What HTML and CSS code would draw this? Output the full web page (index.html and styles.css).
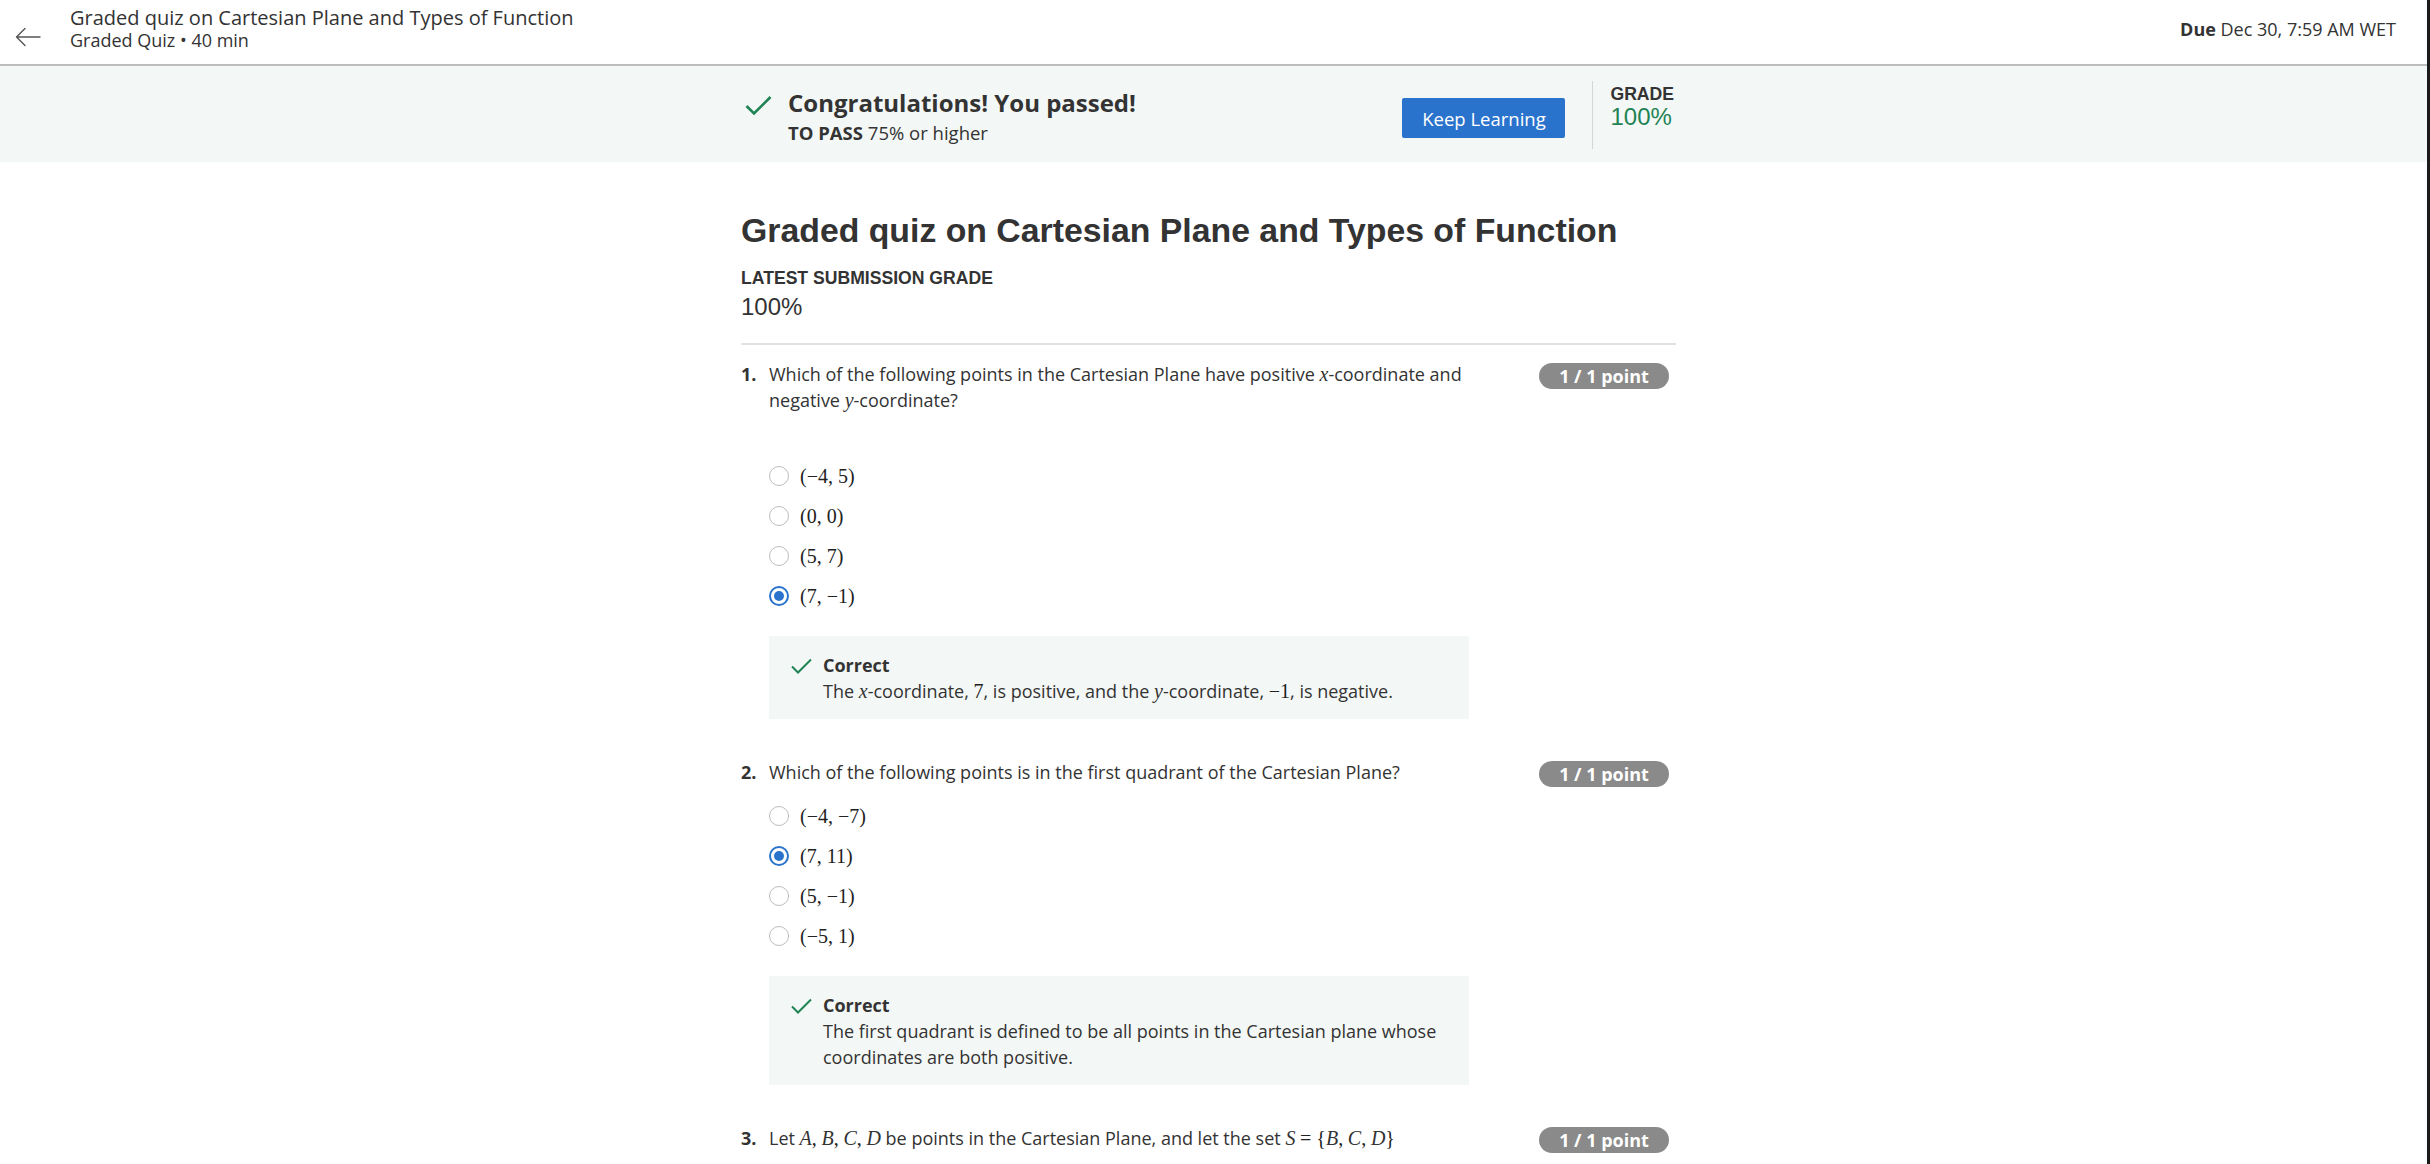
FILE: index.html
```html
<!DOCTYPE html>
<html lang="en">
<head>
<meta charset="utf-8">
<title>Graded quiz on Cartesian Plane and Types of Function</title>
<link rel="stylesheet" href="styles.css">
</head>
<body>
<div class="page">
  <header class="topbar">
    <div class="topbar-left">
      <svg class="back" width="26" height="20" viewBox="0 0 26 20" aria-hidden="true">
        <path d="M25 10 H1.5 M10 1.5 L1.5 10 L10 18.5" fill="none" stroke="#555" stroke-width="1.4" stroke-linecap="round" stroke-linejoin="round"/>
      </svg>
      <div class="topbar-titles">
        <div class="topbar-title">Graded quiz on Cartesian Plane and Types of Function</div>
        <div class="topbar-sub">Graded Quiz • 40 min</div>
      </div>
    </div>
    <div class="due"><b>Due</b> Dec 30, 7:59 AM WET</div>
  </header>

  <section class="banner">
    <div class="banner-inner">
      <svg class="banner-check" width="27" height="21" viewBox="0 0 27 21" aria-hidden="true">
        <path d="M1.5 11 L9 18.5 L25.5 2" fill="none" stroke="#1f8354" stroke-width="2.6"/>
      </svg>
      <div class="banner-text">
        <div class="banner-head">Congratulations! You passed!</div>
        <div class="banner-sub"><b>TO PASS</b> 75% or higher</div>
      </div>
      <button class="btn-keep">Keep Learning</button>
      <div class="banner-divider"></div>
      <div class="grade">
        <div class="grade-label">GRADE</div>
        <div class="grade-value">100%</div>
      </div>
    </div>
  </section>

  <main class="column">
    <h1 class="quiz-title">Graded quiz on Cartesian Plane and Types of Function</h1>
    <div class="latest-label">LATEST SUBMISSION GRADE</div>
    <div class="latest-value">100%</div>
    <hr class="rule">

    <div class="question">
      <div class="q-head">
        <span class="q-num">1.</span>
        <div class="q-text">Which of the following points in the Cartesian Plane have positive <span class="mi">x</span>-coordinate and<br>negative <span class="mi">y</span>-coordinate?</div>
        <span class="badge">1 / 1 point</span>
      </div>
      <div class="q-spacer"></div>
      <div class="options">
        <div class="option"><span class="radio"></span><span class="math">(−4, 5)</span></div>
        <div class="option"><span class="radio"></span><span class="math">(0, 0)</span></div>
        <div class="option"><span class="radio"></span><span class="math">(5, 7)</span></div>
        <div class="option"><span class="radio radio-on"></span><span class="math">(7, −1)</span></div>
      </div>
      <div class="feedback">
        <svg class="fb-check" width="21" height="16" viewBox="0 0 21 16" aria-hidden="true">
          <path d="M1 8.5 L7 14.5 L20 1.5" fill="none" stroke="#1f8354" stroke-width="2"/>
        </svg>
        <div class="fb-body">
          <div class="fb-title">Correct</div>
          <div class="fb-text">The <span class="mi">x</span>-coordinate, <span class="mn">7</span>, is positive, and the <span class="mi">y</span>-coordinate, <span class="mn">−1</span>, is negative.</div>
        </div>
      </div>
    </div>

    <div class="question">
      <div class="q-head">
        <span class="q-num">2.</span>
        <div class="q-text">Which of the following points is in the first quadrant of the Cartesian Plane?</div>
        <span class="badge">1 / 1 point</span>
      </div>
      <div class="options">
        <div class="option"><span class="radio"></span><span class="math">(−4, −7)</span></div>
        <div class="option"><span class="radio radio-on"></span><span class="math">(7, 11)</span></div>
        <div class="option"><span class="radio"></span><span class="math">(5, −1)</span></div>
        <div class="option"><span class="radio"></span><span class="math">(−5, 1)</span></div>
      </div>
      <div class="feedback">
        <svg class="fb-check" width="21" height="16" viewBox="0 0 21 16" aria-hidden="true">
          <path d="M1 8.5 L7 14.5 L20 1.5" fill="none" stroke="#1f8354" stroke-width="2"/>
        </svg>
        <div class="fb-body">
          <div class="fb-title">Correct</div>
          <div class="fb-text">The first quadrant is defined to be all points in the Cartesian plane whose<br>coordinates are both positive.</div>
        </div>
      </div>
    </div>

    <div class="question">
      <div class="q-head">
        <span class="q-num">3.</span>
        <div class="q-text">Let <span class="mi">A</span><span class="mn">,</span> <span class="mi">B</span><span class="mn">,</span> <span class="mi">C</span><span class="mn">,</span> <span class="mi">D</span> be points in the Cartesian Plane, and let the set <span class="mi">S</span> <span class="mn">= {</span><span class="mi">B</span><span class="mn">,</span> <span class="mi">C</span><span class="mn">,</span> <span class="mi">D</span><span class="mn">}</span></div>
        <span class="badge">1 / 1 point</span>
      </div>
    </div>
  </main>
</div>
</body>
</html>
```

FILE: styles.css
```css
* { box-sizing: border-box; }
html, body { margin: 0; padding: 0; background: #ffffff; }
body { width: 2430px; height: 1164px; overflow: hidden; font-family: "Open Sans", "Liberation Sans", sans-serif; color: #1f1f1f; }

.page { width: 2430px; min-height: 1164px; border-right: 3px solid #1a1a1a; }

/* top bar */
.topbar { height: 66px; border-bottom: 2px solid #bdbdbd; display: flex; justify-content: space-between; align-items: flex-start; padding: 6px 31px 0 15px; }
.topbar-left { display: flex; align-items: flex-start; }
.back { margin-top: 21px; margin-right: 29px; }
.topbar-title { font-size: 20px; line-height: 24px; color: #333; }
.topbar-sub { font-size: 18px; line-height: 20px; color: #333; }
.due { font-size: 18px; line-height: 24px; color: #333; margin-top: 11px; }
.due b { font-weight: 700; }

/* banner */
.banner { background: #f3f8f6; height: 96px; }
.banner-inner { width: 929px; margin-left: 745px; display: flex; align-items: flex-start; height: 96px; }
.banner-check { margin-top: 29px; margin-right: 16px; flex: none; }
.banner-text { flex: 1; margin-top: 22px; }
.banner-head { font-size: 24px; line-height: 30px; font-weight: 700; color: #333; }
.banner-sub { font-size: 18.5px; line-height: 24px; color: #333; margin-top: 3px; }
.banner-sub b { font-weight: 700; }
.btn-keep { margin-top: 32px; width: 163px; height: 40px; background: #2a73cc; color: #fff; border: 0; border-radius: 2px; font-family: "Open Sans", sans-serif; font-size: 18.5px; padding: 0; }
.banner-divider { width: 1px; height: 68px; background: #d6d6d6; margin: 15px 17px 0 27px; }
.grade { margin-top: 18px; font-family: "Liberation Sans", Arial, sans-serif; }
.grade-label { font-size: 17.6px; line-height: 20px; font-weight: 700; color: #333; }
.grade-value { font-size: 24px; line-height: 26px; color: #1f8354; }

/* main column */
.column { width: 935px; margin-left: 741px; }
.quiz-title { font-family: "Liberation Sans", Arial, sans-serif; font-size: 33.8px; line-height: 40px; font-weight: 700; color: #333; margin: 48px 0 0 0; }
.latest-label { font-family: "Liberation Sans", Arial, sans-serif; font-size: 17.6px; line-height: 22px; font-weight: 700; color: #333; margin-top: 17px; }
.latest-value { font-family: "Liberation Sans", Arial, sans-serif; font-size: 24px; line-height: 30px; color: #333; margin-top: 3px; }
.rule { border: 0; height: 2px; background: #e1e1e1; margin: 21px 0 0 0; }

.question { margin-top: 16px; }
.question + .question { margin-top: 40px; }
.q-head { display: flex; align-items: flex-start; }
.q-num { width: 28px; flex: none; font-weight: 700; font-size: 18px; line-height: 26px; color: #333; }
.q-text { flex: 1; font-size: 18px; line-height: 26px; color: #333; padding-right: 40px; }
.badge { flex: none; margin-top: 2px; margin-right: 7px; width: 130px; height: 26px; border-radius: 13px; background: #8a8a8a; color: #fff; font-weight: 700; font-size: 18px; line-height: 26px; text-align: center; }

.q-spacer { height: 34px; }
.options { padding-left: 28px; margin-top: 9px; }
.option { height: 40px; display: flex; align-items: center; }
.radio { width: 20px; height: 20px; border-radius: 50%; border: 1.5px solid #bdbdbd; background: #fff; margin-right: 11px; flex: none; position: relative; }
.radio-on { border: 2px solid #2a73cc; }
.radio-on::after { content: ""; position: absolute; left: 3px; top: 3px; width: 10px; height: 10px; border-radius: 50%; background: #2a73cc; }
.math, .mn { font-family: "Liberation Serif", "DejaVu Serif", serif; font-size: 20px; line-height: 1; color: #222; }
.mi { font-family: "Liberation Serif", "DejaVu Serif", serif; font-style: italic; font-size: 20px; line-height: 1; }

.feedback { margin: 20px 0 0 28px; width: 700px; background: #f3f8f6; display: flex; align-items: flex-start; padding: 16px 22px 15px 22px; }
.fb-check { flex: none; margin-top: 6px; margin-right: 11px; }
.fb-title { font-weight: 700; font-size: 18px; line-height: 26px; color: #333; }
.fb-text { font-size: 18px; line-height: 26px; color: #333; }
```
